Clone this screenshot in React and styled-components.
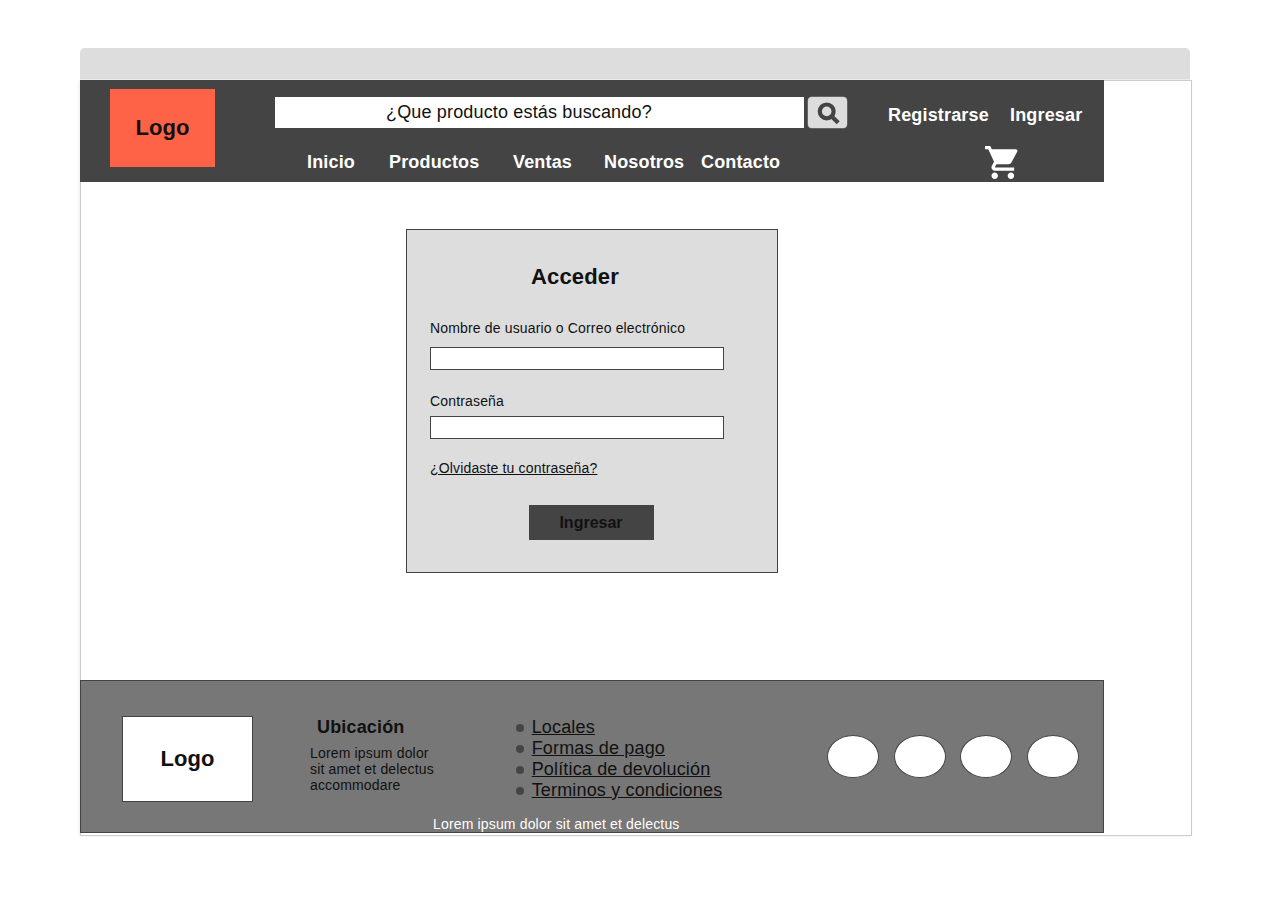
import React from "react";
import styled, { createGlobalStyle } from "styled-components";

const GlobalStyle = createGlobalStyle`
  * { box-sizing: border-box; }
  body {
    margin: 0;
    background: #fff;
    color: #111;
    font-family: "Liberation Sans", Arial, sans-serif;
    letter-spacing: 0.01em;
  }
`;

const Page = styled.div`
  height: 914px;
  padding: 48px 0 0 80px;
`;

const TitleBar = styled.div`
  width: 1110px;
  height: 32px;
  background: #ddd;
  border-bottom: 1px solid #f2f2f2;
  border-radius: 5px 5px 0 0;
`;

const Frame = styled.div`
  width: 1112px;
  height: 756px;
  background: #fff;
  border: 1px solid #ccc;
  box-shadow: -1px 0 3px rgba(0, 0, 0, 0.08);
`;

const Site = styled.div`
  width: 1024px;
  margin: -1px 0 0 -1px;
`;

const Header = styled.header`
  display: grid;
  grid-template-columns: 165px 613px 1fr;
  height: 102px;
  padding-left: 30px;
  background: #444;
`;

const LogoBox = styled.div`
  display: flex;
  align-items: center;
  justify-content: center;
  width: ${(p) => p.$width}px;
  height: ${(p) => p.$height}px;
  margin-top: ${(p) => p.$top}px;
  background: ${(p) => p.$fill};
  border: ${(p) => (p.$outlined ? "1px solid #444" : "none")};
  font-size: 22px;
  line-height: 26px;
  font-weight: bold;
  letter-spacing: 0;
`;

const Center = styled.div`
  padding-top: 17px;
`;

const SearchRow = styled.div`
  display: flex;
  gap: 4px;
`;

const SearchField = styled.div`
  width: 529px;
  height: 31px;
  padding-left: 111px;
  background: #fff;
  font-size: 18px;
  line-height: 31px;
`;

const SearchButton = styled.button`
  width: 39px;
  height: 31px;
  padding: 0;
  border: 0;
  border-radius: 4px;
  background: #ddd;
  box-shadow: 0 0 0 0.5px #888;

  svg { display: block; }
`;

const Nav = styled.nav`
  display: grid;
  grid-template-columns: 82px 124px 91px 97px auto;
  margin-top: 24px;
  padding-left: 32px;
`;

const NavLink = styled.a`
  color: #fff;
  font-size: 18px;
  line-height: 20px;
  font-weight: bold;
`;

const Account = styled.div`
  padding-top: 25px;
`;

const AccountLinks = styled.div`
  display: grid;
  grid-template-columns: 122px auto;
`;

const CartIcon = styled.svg`
  display: block;
  width: 34px;
  height: 33px;
  margin: 21px 0 0 97px;
  fill: #fff;
`;

const Main = styled.main`
  height: 498px;
  padding: 47px 0 0 326px;
`;

const Card = styled.form`
  display: flex;
  flex-direction: column;
  width: 372px;
  height: 344px;
  padding: 34px 23px 0;
  background: #ddd;
  border: 1px solid #444;
`;

const CardTitle = styled.h1`
  margin: 0 0 30px 101px;
  font-size: 22px;
  line-height: 26px;
`;

const Label = styled.label`
  margin-bottom: ${(p) => p.$gap}px;
  font-size: 14px;
  line-height: 16px;
`;

const Input = styled.input`
  width: 294px;
  height: 23px;
  margin: 0 0 ${(p) => p.$gap}px;
  padding: 0 4px;
  background: #fff;
  border: 1px solid #444;
  border-radius: 0;
`;

const ForgotLink = styled.a`
  align-self: flex-start;
  font-size: 14px;
  line-height: 16px;
  text-decoration: underline;
`;

const SubmitButton = styled.button`
  width: 125px;
  height: 35px;
  margin: 29px 0 0 99px;
  padding: 0 1px 0 0;
  background: #444;
  border: 0;
  color: #111;
  font: bold 16px/18px "Liberation Sans", Arial, sans-serif;
  letter-spacing: 0;
`;

const Footer = styled.footer`
  height: 153px;
  background: #777;
  border: 1px solid #444;
`;

const FooterColumns = styled.div`
  display: grid;
  grid-template-columns: 188px 205px 311px auto;
  height: 135px;
  padding-left: 41px;
`;

const Location = styled.div`
  padding-top: 36px;
`;

const LocationTitle = styled.h2`
  margin: 0 0 8px 7px;
  font-size: 18px;
  line-height: 20px;
`;

const LocationText = styled.p`
  width: 130px;
  margin: 0;
  font-size: 14px;
  line-height: 16px;
`;

const LinkList = styled.ul`
  margin: 0;
  padding: 36px 0 0 1px;
  list-style: none;
`;

const LinkItem = styled.li`
  display: flex;
  align-items: center;
  height: 21px;
  font-size: 18px;
  line-height: 21px;

  &::before {
    content: "";
    width: 8px;
    height: 8px;
    margin: 0 7.7px 0 0;
    background: #444;
    border-radius: 50%;
  }
`;

const FooterLink = styled.a`
  text-decoration: underline;
`;

const Socials = styled.div`
  display: flex;
  gap: 14.67px;
  padding: 54px 0 0 1px;
`;

const Social = styled.span`
  flex: none;
  width: 52px;
  height: 43px;
  background: #fff;
  border: 1px solid #444;
  border-radius: 50%;
`;

const Legal = styled.p`
  margin: 0 0 0 352px;
  color: #fff;
  font-size: 14px;
  line-height: 16px;
`;

const navItems = ["Inicio", "Productos", "Ventas", "Nosotros", "Contacto"];
const footerLinks = ["Locales", "Formas de pago", "Política de devolución", "Terminos y condiciones"];

export default function App() {
  return (
    <Page>
      <GlobalStyle />
      <TitleBar />
      <Frame>
        <Site>
          <Header>
            <LogoBox $width={105} $height={78} $top={9} $fill="tomato">Logo</LogoBox>
            <Center>
              <SearchRow>
                <SearchField>¿Que producto estás buscando?</SearchField>
                <SearchButton aria-label="Buscar">
                  <svg width="39" height="31" viewBox="0 0 39 31" fill="none" stroke="#444" strokeWidth="4.2">
                    <circle cx="18.7" cy="14.4" r="6.9" />
                    <path d="M23.5 19.2L30.2 25.7" />
                  </svg>
                </SearchButton>
              </SearchRow>
              <Nav>
                {navItems.map((item) => <NavLink key={item}>{item}</NavLink>)}
              </Nav>
            </Center>
            <Account>
              <AccountLinks>
                <NavLink>Registrarse</NavLink>
                <NavLink>Ingresar</NavLink>
              </AccountLinks>
              <CartIcon viewBox="1 2 21 20" preserveAspectRatio="none">
                <path d="M7 18c-1.1 0-1.99.9-1.99 2S5.9 22 7 22s2-.9 2-2-.9-2-2-2zM1 2v2h2l3.6 7.59-1.35 2.45c-.16.28-.25.61-.25.96 0 1.1.9 2 2 2h12v-2H7.42c-.14 0-.25-.11-.25-.25l.03-.12.9-1.63h7.45c.75 0 1.41-.41 1.75-1.03l3.58-6.49A1.003 1.003 0 0 0 20 4H5.21l-.94-2H1zm16 16c-1.1 0-1.99.9-1.99 2s.89 2 1.99 2 2-.9 2-2-.9-2-2-2z" />
              </CartIcon>
            </Account>
          </Header>
          <Main>
            <Card>
              <CardTitle>Acceder</CardTitle>
              <Label htmlFor="user" $gap={11}>Nombre de usuario o Correo electrónico</Label>
              <Input id="user" $gap={23} />
              <Label htmlFor="password" $gap={7}>Contraseña</Label>
              <Input id="password" type="password" $gap={21} />
              <ForgotLink>¿Olvidaste tu contraseña?</ForgotLink>
              <SubmitButton type="button">Ingresar</SubmitButton>
            </Card>
          </Main>
          <Footer>
            <FooterColumns>
              <LogoBox $width={131} $height={86} $top={35} $fill="#fff" $outlined>Logo</LogoBox>
              <Location>
                <LocationTitle>Ubicación</LocationTitle>
                <LocationText>Lorem ipsum dolor sit amet et delectus accommodare</LocationText>
              </Location>
              <LinkList>
                {footerLinks.map((link) => (
                  <LinkItem key={link}><FooterLink>{link}</FooterLink></LinkItem>
                ))}
              </LinkList>
              <Socials>
                <Social />
                <Social />
                <Social />
                <Social />
              </Socials>
            </FooterColumns>
            <Legal>Lorem ipsum dolor sit amet et delectus</Legal>
          </Footer>
        </Site>
      </Frame>
    </Page>
  );
}
